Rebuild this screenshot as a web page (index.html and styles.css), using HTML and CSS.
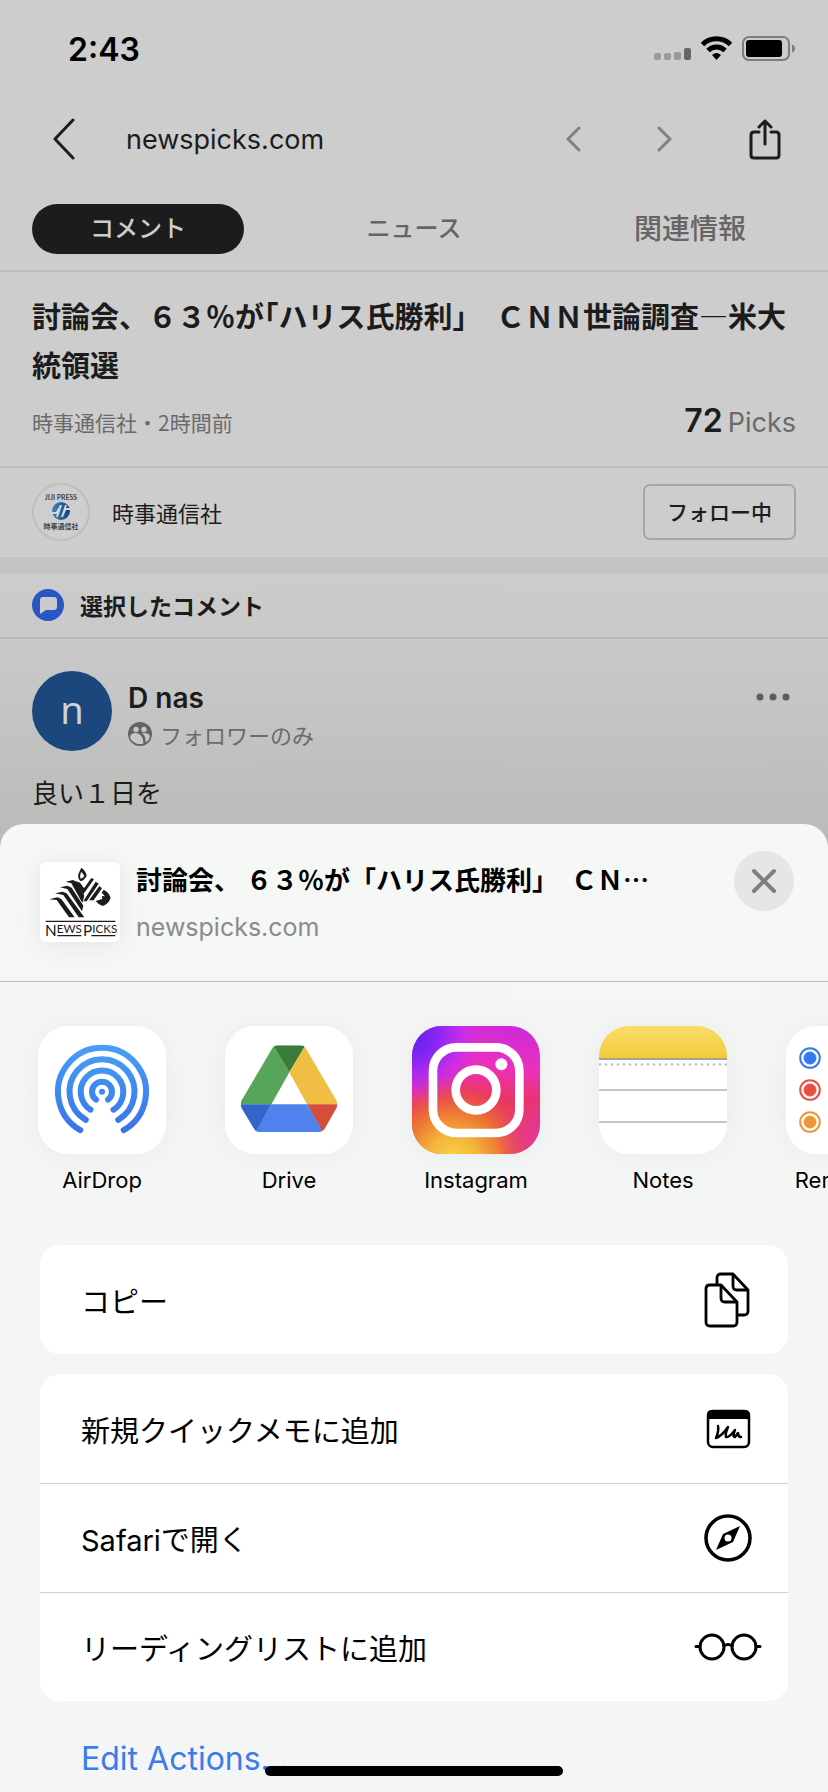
FILE: index.html
```html
<!DOCTYPE html>
<html lang="ja">
<head>
<meta charset="utf-8">
<meta name="viewport" content="width=device-width, initial-scale=1">
<title>newspicks.com</title>
<link rel="stylesheet" href="styles.css">
</head>
<body>
<main class="page">
  <header class="status">
    <span class="clock">2:43</span>
    <svg class="status-icons" width="142" height="26" viewBox="0 0 142 26" aria-hidden="true">
      <g fill="#9a9a9a"><rect x="0" y="17" width="7" height="7" rx="2"/><rect x="10" y="17" width="7" height="7" rx="2"/><rect x="20" y="16" width="7" height="8" rx="2"/></g>
      <rect x="30" y="12" width="7" height="12" rx="2" fill="#666"/>
      <g fill="none" stroke="#000" stroke-width="5">
        <path d="M48.500 8.500a20 20 0 0 1 28 0"/>
        <path d="M54 14.500a12 12 0 0 1 17 0"/>
      </g>
      <path d="M58 19q4.500-4 9 0L62.500 24z"/>
      <rect x="89" y="1" width="46" height="23" rx="6" fill="none" stroke="#7c7c7c" stroke-width="2"/>
      <rect x="92" y="4" width="36" height="17" rx="3"/>
      <path d="M138 8.500q3 1 3 4t-3 4z" fill="#7c7c7c"/>
    </svg>
  </header>

  <nav class="nav">
    <button class="icon-btn" aria-label="戻る"><svg width="24" height="42" viewBox="0 0 24 42"><path d="M21 2 3 21l18 19" fill="none" stroke="#1c1c1c" stroke-width="3" stroke-linecap="round" stroke-linejoin="round"/></svg></button>
    <span class="host">newspicks.com</span>
    <button class="icon-btn" aria-label="前のページ"><svg width="16" height="26" viewBox="0 0 16 26"><path d="M14 2 3 13l11 11" fill="none" stroke="#808080" stroke-width="3" stroke-linecap="round" stroke-linejoin="round"/></svg></button>
    <button class="icon-btn nav-next" aria-label="次のページ"><svg width="16" height="26" viewBox="0 0 16 26"><path d="m2 2 11 11L2 24" fill="none" stroke="#808080" stroke-width="3" stroke-linecap="round" stroke-linejoin="round"/></svg></button>
    <button class="icon-btn nav-share" aria-label="共有"><svg width="32" height="42" viewBox="0 0 32 42"><g fill="none" stroke="#1c1c1c" stroke-width="3" stroke-linecap="round" stroke-linejoin="round"><path d="M10 14H5q-3 0-3 3v20q0 3 3 3h22q3 0 3-3V17q0-3-3-3h-5M16 26V3M10 9l6-6 6 6"/></g></svg></button>
  </nav>

  <div class="tabs">
    <button class="tab tab-active">コメント</button>
    <button class="tab">ニュース</button>
    <button class="tab tab-wide">関連情報</button>
  </div>

  <section class="article">
    <h1 class="headline">討論会、６３％が<span class="half">「</span>ハリス氏勝利」　ＣＮＮ世論調査―米大統領選</h1>
    <div class="meta">
      <span class="source">時事通信社・2時間前</span>
      <span class="picks"><b class="picks-count">72</b><span>Picks</span></span>
    </div>
  </section>

  <section class="publisher">
    <svg class="publisher-logo" width="58" height="58" viewBox="0 0 58 58" role="img" aria-label="JIJI PRESS">
      <defs><linearGradient id="jiji" x1="0" x2="1"><stop offset="0" stop-color="#3d86b8"/><stop offset="1" stop-color="#173f80"/></linearGradient></defs>
      <circle cx="29" cy="29" r="28" fill="#cecece" stroke="#bebebe" stroke-width="2"/>
      <text class="logo-en" x="29" y="17" text-anchor="middle">JIJI PRESS</text>
      <circle cx="29" cy="28" r="9" fill="url(#jiji)"/>
      <path d="M20 29h4l4-7h2l-4 12h-2l1-3h-5M38 27h-4l-3 7h-2l4-12h2l-1 3h4" fill="#d4d8dc"/>
      <text class="logo-ja" x="29" y="46" text-anchor="middle">時事通信社</text>
    </svg>
    <span class="publisher-name">時事通信社</span>
    <button class="follow">フォロー中</button>
  </section>

  <div class="lower">
    <h2 class="section-title">
      <svg width="32" height="32" viewBox="0 0 32 32" aria-hidden="true"><circle cx="16" cy="16" r="16" fill="#2856c4"/><path d="M11 8h11q3 0 3 3v7q0 3-3 3H14l-6 4V11q0-3 3-3z" fill="#cbcbcb"/></svg>
      選択したコメント
    </h2>
    <article class="comment">
      <div class="comment-head">
        <span class="avatar">n</span>
        <div class="who">
          <span class="name">D nas</span>
          <span class="scope">
            <svg width="24" height="24" viewBox="0 0 24 24" aria-hidden="true"><circle cx="12" cy="12" r="12" fill="#636363"/><g fill="#c6c7c5"><circle cx="8" cy="7.500" r="2.700"/><circle cx="16" cy="7.500" r="2.700"/><path d="M2 15q1-4 5.500-4 7.500 0 8 10.500-3.500 1.200-7 0Q3 19.500 2 15zM14 11q7-.500 8 3-.500 4-4.500 6.500Q18 14 14 11z"/></g></svg>
            フォロワーのみ
          </span>
        </div>
        <button class="icon-btn more" aria-label="その他"><svg width="34" height="8" viewBox="0 0 34 8"><g fill="#5c5c5b"><circle cx="4" cy="4" r="3.500"/><circle cx="17" cy="4" r="3.500"/><circle cx="30" cy="4" r="3.500"/></g></svg></button>
      </div>
      <p class="comment-text">良い１日を</p>
    </article>
  </div>

  <section class="sheet" role="dialog" aria-label="共有">
    <header class="sheet-head">
      <svg class="thumb" width="80" height="80" viewBox="30 39 240 240" role="img" aria-label="NewsPicks">
        <g fill="#1c1c1c">
          <path fill-rule="evenodd" d="M154 56q14 10 16 24-5 12-18 17-10-8-7-22zM154 68q-6 12-2 21 10-3 11-9z"/>
          <path d="M58 151 82 145 94 150 134 205H117L80 153z"/>
          <path d="M75 133 98 128 110 133 163 205H146L100 138z"/>
          <path d="M90 115 112 110 125 116 160 170 156 187 112 120z"/>
          <path d="M107 98 129 93 141 99 163 140 157 162 124 103z"/>
          <path d="M138 97 150 101 162 118 184 87 192 91 160 136z"/>
          <path d="M197 98 206 104 170 157 160 157z"/>
          <path d="M208 111 216 118 191 154 177 154z"/>
          <path d="M221 122q16 8 21 24-6 19-24 25-12-3-21-15l20-6-1-9 9 1-10-11z"/>
          <path d="M47 215h209v4H47zM82 258h72v4H82zM184 258h72v4h-72z"/>
        </g>
        <text class="np-logo" x="45" y="251"><tspan class="np-cap" y="260">N</tspan><tspan y="251">EWS</tspan><tspan class="np-cap" dx="4" y="260">P</tspan><tspan y="251">ICKS</tspan></text>
      </svg>
      <div class="sheet-titles">
        <h2 class="sheet-title">討論会、 ６３％が「ハリス氏勝利」　ＣＮ…</h2>
        <span class="sheet-host">newspicks.com</span>
      </div>
      <button class="close" aria-label="閉じる"><svg width="26" height="26" viewBox="0 0 26 26"><path d="m3 3 20 20M23 3 3 23" stroke="#7e7f7e" stroke-width="4" stroke-linecap="round"/></svg></button>
    </header>

    <div class="apps">
      <button class="app">
        <svg class="tile" viewBox="0 0 128 128" aria-hidden="true">
          <defs><linearGradient id="air" gradientUnits="userSpaceOnUse" x1="0" y1="18" x2="0" y2="108"><stop offset="0" stop-color="#48a0f4"/><stop offset="1" stop-color="#3872ea"/></linearGradient></defs>
          <rect width="128" height="128" fill="#fff"/>
          <g fill="none" stroke="url(#air)" stroke-width="6" stroke-linecap="round">
            <path d="M42.300 104.100A44 44 0 1 1 85.700 104.100"/>
            <path d="M47.800 93.800A32.500 32.500 0 1 1 80.200 93.800"/>
            <path d="M52.500 83.700A21.300 21.300 0 1 1 75.500 83.700"/>
            <path d="M58 73.700A10 10 0 1 1 70 73.700"/>
          </g>
          <circle cx="64" cy="65.700" r="3" fill="#3d8af0"/>
        </svg>
        <span class="app-name">AirDrop</span>
      </button>
      <button class="app">
        <svg class="tile" viewBox="675 78 384 384" aria-hidden="true">
          <defs><clipPath id="drv"><path d="M834 136h67q11 0 17 10l91 155q6 12 0 24l-34 60q-7 11-18 11H779q-12 0-18-11l-36-60q-6-12 0-24l91-155q6-10 18-10z"/></clipPath></defs>
          <rect x="675" y="78" width="384" height="384" fill="#fff"/>
          <g clip-path="url(#drv)">
            <path d="M700 313h114l54-96-54-90z" fill="#57a55b"/>
            <path d="M814 127h108l-54 90z" fill="#3a7c3b"/>
            <path d="M868 217 922 127l110 186H921z" fill="#f0be42"/>
            <path d="M921 313h110l-60 90z" fill="#d64d3c"/>
            <path d="M814 313h107l52 90H760z" fill="#5082ee"/>
            <path d="M700 313h114l-52 90z" fill="#3165c9"/>
          </g>
        </svg>
        <span class="app-name">Drive</span>
      </button>
      <button class="app">
        <svg class="tile" viewBox="0 0 384 384" aria-hidden="true">
          <defs>
            <linearGradient id="igb" x1=".55" y1="0" x2=".45" y2="1"><stop offset="0" stop-color="#cf2bd8"/><stop offset=".3" stop-color="#ec30bb"/><stop offset=".55" stop-color="#e93566"/><stop offset="1" stop-color="#e8563b"/></linearGradient>
            <radialGradient id="igp" cx="0" cy=".08" r=".58"><stop offset="0" stop-color="#5c20f2"/><stop offset=".35" stop-color="#8a26f3"/><stop offset=".7" stop-color="#c72df0" stop-opacity=".8"/><stop offset="1" stop-color="#e030c8" stop-opacity="0"/></radialGradient>
            <radialGradient id="igy" cx=".32" cy="1.050" r=".66"><stop offset="0" stop-color="#f8d545"/><stop offset=".3" stop-color="#f4b53b"/><stop offset=".6" stop-color="#ee7a30" stop-opacity=".85"/><stop offset="1" stop-color="#e93c50" stop-opacity="0"/></radialGradient>
            <radialGradient id="igr" cx="1.050" cy=".88" r=".4"><stop offset="0" stop-color="#e22fa8"/><stop offset="1" stop-color="#e22fa8" stop-opacity="0"/></radialGradient>
          </defs>
          <rect width="384" height="384" fill="url(#igb)"/><rect width="384" height="384" fill="url(#igp)"/><rect width="384" height="384" fill="url(#igy)"/><rect width="384" height="384" fill="url(#igr)"/>
          <g fill="none" stroke="#fff" stroke-width="26"><rect x="63" y="64" width="259" height="257" rx="70"/><circle cx="192" cy="192" r="61"/></g>
          <circle cx="268" cy="115" r="18" fill="#fff"/>
        </svg>
        <span class="app-name">Instagram</span>
      </button>
      <button class="app">
        <svg class="tile" viewBox="0 0 128 128" aria-hidden="true">
          <defs><linearGradient id="note" x1="0" x2="0" y1="0" y2="1"><stop offset="0" stop-color="#f9dc6b"/><stop offset="1" stop-color="#f2cc3d"/></linearGradient></defs>
          <rect width="128" height="128" fill="#fff"/>
          <rect width="128" height="32" fill="url(#note)"/>
          <path d="M0 33h128" stroke="#a5a29a" stroke-width="2"/>
          <path d="M1 38.500h127" stroke="#b9b9b9" stroke-width="2.500" stroke-linecap="round" stroke-dasharray="0 6"/>
          <path d="M0 64h128M0 96h128" stroke="#c4c4c4" stroke-width="2"/>
        </svg>
        <span class="app-name">Notes</span>
      </button>
      <button class="app">
        <svg class="tile" viewBox="0 0 128 128" aria-hidden="true">
          <rect width="128" height="128" fill="#fff"/>
          <g fill="#3478f0" stroke="#3478f0"><circle cx="24" cy="32" r="6"/><circle cx="24" cy="32" r="9.800" fill="none" stroke-width="2"/></g>
          <g fill="#e94e40" stroke="#e94e40"><circle cx="24" cy="64" r="6"/><circle cx="24" cy="64" r="9.800" fill="none" stroke-width="2"/></g>
          <g fill="#ee9637" stroke="#ee9637"><circle cx="24" cy="96" r="6"/><circle cx="24" cy="96" r="9.800" fill="none" stroke-width="2"/></g>
          <path d="M46 32h82M46 64h82M46 96h82" stroke="#c8c8c8" stroke-width="2"/>
        </svg>
        <span class="app-name">Reminders</span>
      </button>
    </div>

    <div class="actions">
      <div class="card">
        <button class="action">コピー
          <svg width="68" height="56" viewBox="0 0 68 56" aria-hidden="true"><g fill="#fff" stroke="#000" stroke-width="2.800" stroke-linejoin="round"><path d="M23 13V6q0-4 4-4h12l15 16v21q0 4-4 4H40"/><path d="M39 2v12q0 4 4 4h11" fill="none"/><path d="M16 13h11l16 17v20q0 4-4 4H16q-4 0-4-4V17q0-4 4-4z"/><path d="M27 13v13q0 4 4 4h12" fill="none"/></g></svg>
        </button>
      </div>
      <div class="card">
        <button class="action">新規クイックメモに追加
          <svg width="68" height="40" viewBox="0 0 68 40" aria-hidden="true"><rect x="14" y="2" width="41" height="36" rx="5" fill="#fff" stroke="#000" stroke-width="2.500"/><path d="M13 10V6q0-5 5-5h33q5 0 5 5v8q0-4-4-4H17q-4 0-4 4z"/><path d="M24 17Q25 22 22 29 28 27 34 18 31 25 32 28 35 29 41 21 38 28 41 28L44 24Q44 28 47 28" fill="none" stroke="#000" stroke-width="2.500" stroke-linecap="round" stroke-linejoin="round"/></svg>
        </button>
        <button class="action">Safariで開く
          <svg width="68" height="48" viewBox="0 0 68 48" aria-hidden="true"><circle cx="34" cy="24" r="22" fill="none" stroke="#000" stroke-width="3.500"/><path fill-rule="evenodd" d="M46 12 39 28 22 36 29 20zM34 20.500a3.500 3.500 0 1 0 0 7 3.500 3.500 0 0 0 0-7z"/></svg>
        </button>
        <button class="action">リーディングリストに追加
          <svg width="68" height="28" viewBox="0 0 68 28" aria-hidden="true"><g fill="none" stroke="#000" stroke-width="3"><circle cx="18" cy="14" r="12"/><circle cx="50" cy="14" r="12"/><path d="M30 13q4-3 8 0M2 13.500h4M62 13.500h4" stroke-linecap="round"/></g></svg>
        </button>
      </div>
      <a class="edit" href="#edit">Edit Actions...</a>
    </div>
    <div class="home-bar"></div>
  </section>
</main>
</body>
</html>
```
FILE: styles.css
```css
* { box-sizing: border-box; }
body {
  margin: 0;
  background: #cdcdcd;
  color: #1c1c1c;
  font-family: Inter, "Noto Sans CJK JP", sans-serif;
}
h1, h2, p { margin: 0; }
button {
  border: 0;
  padding: 0;
  background: none;
  color: inherit;
  font: inherit;
}
svg { display: block; flex: none; }
.page { min-height: 100vh; display: flex; flex-direction: column; overflow: hidden; }

.status {
  height: 98px;
  padding: 0 32px 0 68px;
  display: flex;
  align-items: center;
  justify-content: space-between;
  color: #000;
}
.clock { font-size: 32px; font-weight: 600; }

.nav {
  height: 82px;
  padding: 0 47px 0 52px;
  display: flex;
  align-items: center;
}
.icon-btn { display: flex; }
.host { flex: 1; margin-left: 50px; font-size: 27px; }
.nav-next { margin-left: 76px; }
.nav-share { margin-left: 76px; }

.tabs {
  display: grid;
  grid-template-columns: repeat(3, 1fr);
  gap: 64px;
  padding: 24px 32px 16px;
  border-bottom: 2px solid #bdbdbd;
}
.tab {
  height: 50px;
  border-radius: 25px;
  font-size: 24px;
  line-height: 48px;
  font-weight: 500;
  color: #656565;
}
.tab-wide { font-size: 28px; }
.tab-active { background: #1c1c1c; color: #cdcdcd; }

.article { padding: 19px 32px 24px; border-bottom: 2px solid #bdbdbd; }
.headline {
  font-family: "Noto Sans CJK JP", sans-serif;
  font-size: 29px;
  line-height: 49px;
  font-weight: 700;
}
.half { font-feature-settings: "halt"; }
.meta {
  height: 40px;
  margin-top: 13px;
  display: flex;
  justify-content: space-between;
  align-items: center;
  color: #6a6a6a;
}
.source { font-family: "Noto Sans CJK JP", sans-serif; font-size: 21px; line-height: 40px; }
.picks { display: flex; align-items: baseline; gap: 5px; font-size: 27px; line-height: 36px; }
.picks-count { font-size: 32px; font-weight: 600; color: #1c1c1c; }

.publisher {
  height: 89px;
  padding: 0 32px 2px;
  display: flex;
  align-items: center;
}
.logo-en { font: 700 7px Lato, sans-serif; fill: #444; }
.logo-ja { font: 700 7px "Noto Sans CJK JP", sans-serif; fill: #444; }
.publisher-name {
  flex: 1;
  margin-left: 22px;
  font-family: "Noto Sans CJK JP", sans-serif;
  font-size: 22px;
  line-height: 32px;
}
.follow {
  height: 56px;
  padding: 0 22px 2px;
  border: 2px solid #a6a6a6;
  border-radius: 7px;
  font-size: 21px;
  font-weight: 500;
}

.lower {
  margin-bottom: -24px;
  border-top: 16px solid #c3c3c3;
  background: linear-gradient(#cccccc, #c8c8c8 30%, #b9bbb8);
}
.section-title {
  height: 66px;
  padding: 0 32px;
  display: flex;
  align-items: center;
  gap: 16px;
  border-bottom: 2px solid #b8b8b8;
  font-family: "Noto Sans CJK JP", sans-serif;
  font-size: 23px;
  line-height: 32px;
  font-weight: 700;
}
.comment { padding: 32px 32px 38px; }
.comment-head { display: flex; gap: 16px; }
.avatar {
  width: 80px;
  height: 80px;
  border-radius: 50%;
  background: #1b477d;
  color: #cdd2d5;
  font: 38px/76px "Noto Sans", sans-serif;
  text-align: center;
}
.who { flex: 1; display: flex; flex-direction: column; padding-top: 8px; }
.name { font-size: 28px; line-height: 38px; font-weight: 600; }
.scope {
  display: flex;
  align-items: center;
  gap: 8px;
  font-family: "Noto Sans CJK JP", sans-serif;
  font-size: 22px;
  line-height: 34px;
  color: #6b6b6a;
}
.more { height: 8px; margin: 22px 6px 0 0; }
.comment-text {
  margin-top: 23px;
  font-family: "Noto Sans CJK JP", sans-serif;
  font-size: 26px;
  line-height: 36px;
}

.sheet {
  position: relative;
  flex: 1;
  border-radius: 24px 24px 0 0;
  background: linear-gradient(#f6f8f6, #f4f5f5 30%, #f4f5f5);
  color: #000;
}
.sheet-head {
  height: 158px;
  padding: 27px 34px 0 40px;
  display: flex;
  border-bottom: 1px solid #bcbebd;
}
.thumb {
  margin-top: 11px;
  border-radius: 6px;
  background: #fff;
  box-shadow: 0 2px 24px rgba(0, 0, 0, .08);
}
.np-logo { font: 400 35px Lato, sans-serif; fill: #1c1c1c; }
.np-cap { font-size: 46px; }
.sheet-titles { flex: 1; min-width: 0; margin-left: 16px; padding-top: 8px; }
.sheet-title {
  font: 700 26px/40px "Noto Sans CJK JP", sans-serif;
  white-space: nowrap;
  overflow: hidden;
}
.sheet-host { display: block; margin-top: 8px; font-size: 25px; line-height: 40px; color: #8a8b8a; }
.close {
  width: 60px;
  height: 60px;
  border-radius: 50%;
  background: #e5e6e5;
  display: flex;
  align-items: center;
  justify-content: center;
}

.apps { display: flex; gap: 59px; padding: 44px 0 0 38px; overflow: hidden; }
.app { flex: none; width: 128px; display: flex; flex-direction: column; align-items: center; }
.tile {
  width: 128px;
  height: 128px;
  border-radius: 30px;
  box-shadow: 0 0 30px rgba(0, 0, 0, .05);
}
.app-name { margin-top: 10px; font-size: 22px; line-height: 32px; }

.actions { padding: 49px 40px 0; }
.card { margin-bottom: 20px; border-radius: 20px; background: #fff; }
.action {
  width: 100%;
  height: 109px;
  padding: 0 26px 0 41px;
  display: flex;
  align-items: center;
  justify-content: space-between;
  font-size: 29px;
  text-align: left;
}
.action + .action { border-top: 1px solid #d0d1d1; }
.edit {
  display: block;
  padding: 15px 41px 0;
  font-size: 32px;
  line-height: 46px;
  color: #3b7cea;
  text-decoration: none;
}
.home-bar {
  position: absolute;
  bottom: 16px;
  left: 0;
  right: 0;
  width: 36%;
  height: 10px;
  margin: auto;
  border-radius: 5px;
  background: #000;
}
```
